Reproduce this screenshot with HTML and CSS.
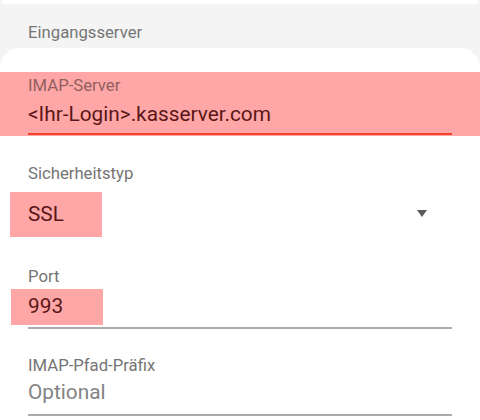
FILE: index.html
```html
<!DOCTYPE html>
<html lang="de">
<head>
<meta charset="utf-8">
<link rel="stylesheet" href="styles.css">
</head>
<body>
<div class="top-card"></div>
<div class="section-title">Eingangsserver</div>
<div class="card">
  <div class="field field-marked">
    <div class="label">IMAP-Server</div>
    <div class="value">&lt;Ihr-Login&gt;.kasserver.com</div>
    <div class="underline underline-active"></div>
  </div>
  <div class="field field-spinner">
    <div class="label">Sicherheitstyp</div>
    <div class="spinner">
      <span class="mark mark-ssl">SSL</span>
      <svg class="caret" width="10" height="7" viewBox="0 0 10 7"><path d="M0 0H10L5 7Z" fill="#5a5a5a"/></svg>
    </div>
  </div>
  <div class="field field-port">
    <div class="label">Port</div>
    <span class="mark mark-port">993</span>
    <div class="underline"></div>
  </div>
  <div class="field field-prefix">
    <div class="label">IMAP-Pfad-Präfix</div>
    <div class="value placeholder">Optional</div>
    <div class="underline underline-last"></div>
  </div>
</div>
</body>
</html>
```

FILE: styles.css
```css
html, body {
  margin: 0;
  padding: 0;
}
body {
  background: #f4f4f4;
  font-family: Roboto, "Noto Sans", sans-serif;
  width: 480px;
  height: 420px;
  overflow: hidden;
}
.top-card {
  height: 4px;
  background: #ffffff;
  border-radius: 0 0 18px 18px;
  margin: 0 2px;
}
.section-title {
  margin: 19px 28px 5px;
  font-size: 16.7px;
  line-height: 20px;
  color: #767676;
}
.card {
  background: #ffffff;
  border-radius: 20px 20px 0 0;
  padding-top: 24px;
  padding-bottom: 4px;
}
.field {
  padding: 0 28px;
}
.label {
  font-size: 16.7px;
  line-height: 20px;
  color: #747474;
}
.value {
  font-size: 20.8px;
  line-height: 28px;
  color: #222222;
}
.underline {
  height: 2px;
  background: #ababab;
}
.field-marked {
  background: #ffa7a7;
  padding-top: 4px;
  padding-bottom: 1px;
}
.field-marked .label {
  color: #915f5f;
}
.field-marked .value {
  margin-top: 4px;
  color: #5b1717;
}
.underline-active {
  margin-top: 5px;
  background: #f2432f;
}
.field-spinner {
  margin-top: 28px;
}
.spinner {
  margin-top: 8px;
  display: flex;
  justify-content: space-between;
  align-items: center;
}
.caret {
  margin-right: 25px;
  margin-top: -3px;
}
.mark {
  display: block;
  background: #ffa7a7;
  color: #5b1717;
  font-size: 20.8px;
}
.mark-ssl {
  margin-left: -18px;
  padding-left: 18px;
  width: 74px;
  height: 45px;
  line-height: 45px;
}
.field-port {
  margin-top: 30px;
}
.mark-port {
  margin-top: 2px;
  margin-left: -17px;
  padding-left: 17px;
  width: 75px;
  height: 36px;
  line-height: 34px;
}
.field-port .underline {
  margin-top: 2px;
}
.field-prefix {
  margin-top: 27px;
}
.placeholder {
  margin-top: 2px;
  color: #838383;
}
.underline-last {
  margin-top: 8px;
}
```
